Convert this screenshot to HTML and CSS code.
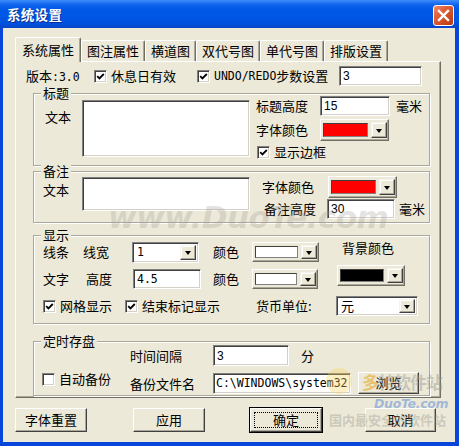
FILE: index.html
```html
<!DOCTYPE html>
<html lang="zh-CN">
<head>
<meta charset="utf-8">
<title>系统设置</title>
<link rel="stylesheet" href="styles.css">
</head>
<body>
<div class="window">
  <div class="titlebar">
    <span class="title">系统设置</span>
    <span class="close"><svg width="13" height="13" viewBox="0 0 13 13"><path d="M2 2 L11 11 M11 2 L2 11" stroke="#fff" stroke-width="2.4" stroke-linecap="square"/></svg></span>
  </div>
  <div class="frame">
    <div class="tabs">
      <div class="tab sel">系统属性</div>
      <div class="tab">图注属性</div>
      <div class="tab">横道图</div>
      <div class="tab">双代号图</div>
      <div class="tab">单代号图</div>
      <div class="tab">排版设置</div>
    </div>
    <div class="panel">
      <div class="row1">
        <div class="c-ver">版本<span class="mono">:3.0</span></div>
        <label class="c-rest chkl"><span class="chk"><svg width="9" height="9" viewBox="0 0 9 9"><path d="M1.2 4.2 L3.4 6.4 L7.8 2" stroke="#000" stroke-width="1.8" fill="none"/></svg></span>休息日有效</label>
        <label class="c-undo chkl"><span class="chk"><svg width="9" height="9" viewBox="0 0 9 9"><path d="M1.2 4.2 L3.4 6.4 L7.8 2" stroke="#000" stroke-width="1.8" fill="none"/></svg></span><span class="mono">UNDO/REDO</span>步数设置</label>
        <div class="inp w83 sans">3</div>
      </div>

      <div class="group g1">
        <span class="legend">标题</span>
        <div class="g1-body">
          <div class="g1-lbl">文本</div>
          <div class="ta g1-ta"></div>
          <div class="rcol g1-r">
            <div class="rrow h20"><span class="lw64">标题高度</span><div class="inp w70 sans">15</div><span class="unit6">毫米</span></div>
            <div class="rrow h22 mt3"><span class="lw64">字体颜色</span><div class="cbox w69 h22"><span class="sw red"></span><span class="ddbtn"></span></div></div>
            <label class="rrow h16 mt3 chkl ml1"><span class="chk"><svg width="9" height="9" viewBox="0 0 9 9"><path d="M1.2 4.2 L3.4 6.4 L7.8 2" stroke="#000" stroke-width="1.8" fill="none"/></svg></span>显示边框</label>
          </div>
        </div>
      </div>

      <div class="group g2">
        <span class="legend">备注</span>
        <div class="g2-body">
          <div class="g2-lbl">文本</div>
          <div class="ta g2-ta"></div>
          <div class="rcol g2-r">
            <div class="rrow h22 mt4"><span class="lw66">字体颜色</span><div class="cbox w69 h22"><span class="sw red"></span><span class="ddbtn"></span></div></div>
            <div class="rrow h20 mt1"><span class="lw65 pl2">备注高度</span><div class="inp w68 sans">30</div><span class="unit4">毫米</span></div>
          </div>
        </div>
      </div>

      <div class="group g3">
        <span class="legend">显示</span>
        <div class="grow r1">
          <span class="w40">线条</span>
          <span class="w49">线宽</span>
          <div class="combo w67 h21 mr14"><span class="val mono">1</span><span class="ddbtn"></span></div>
          <span class="w39">颜色</span>
          <div class="cbox w67 h20 mr23"><span class="sw white"></span><span class="ddbtn"></span></div>
          <span class="bgl">背景颜色</span>
        </div>
        <div class="grow r2">
          <span class="w43">文字</span>
          <span class="w47">高度</span>
          <div class="inp w68 mr12 mono">4.5</div>
          <span class="w39">颜色</span>
          <div class="cbox w66 h20 mr19"><span class="sw white"></span><span class="ddbtn"></span></div>
          <div class="cbox w68 h21 up3"><span class="sw black"></span><span class="ddbtn"></span></div>
        </div>
        <div class="grow r3">
          <label class="chkl w82"><span class="chk"><svg width="9" height="9" viewBox="0 0 9 9"><path d="M1.2 4.2 L3.4 6.4 L7.8 2" stroke="#000" stroke-width="1.8" fill="none"/></svg></span>网格显示</label>
          <label class="chkl w131"><span class="chk"><svg width="9" height="9" viewBox="0 0 9 9"><path d="M1.2 4.2 L3.4 6.4 L7.8 2" stroke="#000" stroke-width="1.8" fill="none"/></svg></span>结束标记显示</label>
          <span class="w80">货币单位:</span>
          <div class="combo w82 h20"><span class="val">元</span><span class="ddbtn"></span></div>
        </div>
      </div>

      <div class="group g4">
        <span class="legend">定时存盘</span>
        <div class="grow t1">
          <span class="w83">时间间隔</span>
          <div class="inp w76 h21 sans">3</div>
          <span class="unit12">分</span>
        </div>
        <div class="grow t2">
          <label class="chkl w88 up2"><span class="chk"></span>自动备份</label>
          <span class="w83 dn1">备份文件名</span>
          <div class="inp w138 h21 mono path">C:\WINDOWS\system32</div>
          <button class="btn browse">浏览</button>
        </div>
      </div>
    </div>

    <div class="buttons">
      <button class="btn bb">字体重置</button>
      <button class="btn bb b2">应用</button>
      <button class="btn bb b3 def"><span class="focus">确定</span></button>
      <button class="btn bb b4">取消</button>
    </div>
  </div>

  <div class="wm wm-url">www.DuoTe.com</div>
  <div class="wm wm-logo">
    <span class="wm-circle"></span>
    <span class="wm-name"><span class="wm-duo">多</span>特软件站</span>
    <span class="wm-dom">DuoTe.com</span>
    <span class="wm-slogan">国内最安全的软件站</span>
  </div>
</div>
</body>
</html>
```

FILE: styles.css
```css
* { box-sizing: border-box; }
html, body { margin: 0; padding: 0; }
body {
  width: 459px;
  height: 446px;
  overflow: hidden;
  background: #0746D8;
  font: 13px/18px "Noto Sans CJK SC", "Liberation Sans", sans-serif;
  color: #000;
}
.mono { font-family: "DejaVu Sans Mono", "Noto Sans CJK SC", monospace; font-size: 11.5px; }
.sans { font-family: "Liberation Sans", sans-serif; font-size: 12px; }

.window {
  position: relative;
  width: 459px;
  height: 446px;
  display: flex;
  flex-direction: column;
}

/* title bar */
.titlebar {
  flex: none;
  height: 28px;
  display: flex;
  align-items: flex-start;
  justify-content: space-between;
  padding: 0 5px 0 7px;
  background: linear-gradient(to bottom, #3C8EFB 0px, #2A7BF6 2px, #0D61EC 5px, #0058E7 10px, #0055E4 18px, #0050DC 24px, #0A44C4 28px);
}
.title {
  margin-top: 5px;
  color: #fff;
  font-weight: bold;
  font-size: 13.5px;
  line-height: 18px;
  letter-spacing: 0.3px;
  text-shadow: 1px 1px 0 #0A2C8C;
}
.close {
  margin-top: 5px;
  width: 21px;
  height: 21px;
  border: 1px solid #fff;
  border-radius: 3px;
  background: linear-gradient(135deg, #F08A6A 0%, #E0603A 35%, #C8461E 75%, #B03A16 100%);
  display: flex;
  align-items: center;
  justify-content: center;
}

/* client frame */
.frame {
  flex: 1;
  background: #ECE9D8;
  border-style: solid;
  border-color: #0746D8;
  border-width: 0 4px 4px 3px;
  padding: 9px 0 0 12px;
}

/* tabs */
.tabs {
  height: 24px;
  display: flex;
  align-items: flex-end;
  position: relative;
  z-index: 1;
}
.tab {
  height: 21px;
  padding: 0 5px;
  line-height: 19px;
  border: 1px solid;
  border-color: #fff #716F64 transparent #fff;
  border-bottom: none;
  border-radius: 2px 2px 0 0;
  box-shadow: inset -1px 0 0 #ACA899;
  background: #ECE9D8;
  white-space: nowrap;
}
.tab.sel {
  height: 25px;
  margin-bottom: -1px;
  padding: 3px 6px 0;
  line-height: 18px;
}

/* panel */
.panel {
  width: 426px;
  height: 337px;
  border: 1px solid;
  border-color: #fff #716F64 #716F64 #fff;
  box-shadow: inset -1px -1px 0 #ACA899;
  padding-top: 4px;
}
.row1 {
  height: 20px;
  display: flex;
  align-items: center;
  padding-left: 10px;
  white-space: nowrap;
}
.c-ver { width: 68px; }
.c-rest { width: 103px; }
.c-undo { width: 142px; }

/* check boxes */
.chkl { display: flex; align-items: center; white-space: nowrap; }
.chk {
  flex: none;
  width: 13px;
  height: 13px;
  margin-right: 4px;
  background: #fff;
  border: 1px solid;
  border-color: #808080 #fff #fff #808080;
  box-shadow: inset 1px 1px 0 #404040, inset -1px -1px 0 #D4D0C8;
  display: flex;
  align-items: center;
  justify-content: center;
}

/* inputs */
.inp {
  flex: none;
  height: 20px;
  background: #fff;
  border: 1px solid;
  border-color: #808080 #fff #fff #808080;
  box-shadow: inset 1px 1px 0 #404040, inset -1px -1px 0 #D4D0C8;
  padding: 0 3px;
  display: flex;
  align-items: center;
  white-space: nowrap;
  overflow: hidden;
}
.ta {
  flex: none;
  background: #fff;
  border: 1px solid;
  border-color: #808080 #fff #fff #808080;
  box-shadow: inset 1px 1px 0 #404040, inset -1px -1px 0 #D4D0C8;
}
.combo {
  flex: none;
  display: flex;
  align-items: stretch;
  background: #fff;
  border: 1px solid;
  border-color: #808080 #fff #fff #808080;
  box-shadow: inset 1px 1px 0 #404040, inset -1px -1px 0 #D4D0C8;
  padding: 2px;
}
.combo .val { flex: 1; padding-left: 2px; display: flex; align-items: center; line-height: 14px; }
.ddbtn {
  flex: none;
  width: 16px;
  background: #ECE9D8;
  border: 1px solid;
  border-color: #F4F3EE #404040 #404040 #F4F3EE;
  box-shadow: inset -1px -1px 0 #ACA899, inset 1px 1px 0 #fff;
  display: flex;
  align-items: center;
  justify-content: center;
}
.ddbtn::after {
  content: "";
  width: 0;
  height: 0;
  border-left: 3.5px solid transparent;
  border-right: 3.5px solid transparent;
  border-top: 4px solid #000;
  margin-top: 1px;
}
.cbox {
  flex: none;
  display: flex;
  align-items: stretch;
  gap: 3px;
  padding: 2px 1px 2px 2px;
  background: #ECE9D8;
  border: 1px solid;
  border-color: #fff #716F64 #716F64 #fff;
  box-shadow: inset -1px -1px 0 #ACA899;
}
.cbox .sw {
  flex: 1;
  border: 1px solid;
  border-color: #404040 #808080 #808080 #404040;
  margin: 1px 0;
}
.sw.red { background: #FF0000; }
.sw.white { background: #fff; }
.sw.black { background: #000; }

/* groups */
.group {
  position: relative;
  margin-left: 17px;
  width: 397px;
  border: 1px solid #ACA899;
  box-shadow: inset 1px 1px 0 #fff, 1px 1px 0 #fff;
}
.legend {
  position: absolute;
  top: -10px;
  left: 7px;
  padding: 0 2px;
  background: #ECE9D8;
  line-height: 18px;
  white-space: nowrap;
}
.g1 { margin-top: 7px; height: 73px; padding: 2px 0 0 11px; }
.g2 { margin-top: 5px; height: 52px; padding: 0 0 0 9px; }
.g3 { margin-top: 12px; height: 89px; padding: 0 0 0 9px; }
.g4 { margin-top: 17px; height: 55px; padding: 0 0 0 8px; }

.g1-body, .g2-body { display: flex; align-items: flex-start; }
.g1-lbl { width: 37px; margin-top: 12px; }
.g1-ta { width: 168px; height: 57px; margin-top: 4px; }
.g1-r { margin-left: 6px; }
.g2-lbl { width: 39px; margin-top: 9px; }
.g2-ta { width: 168px; height: 34px; margin-top: 5px; }
.g2-r { margin-left: 12px; }

.rcol { display: flex; flex-direction: column; }
.rrow { display: flex; align-items: center; white-space: nowrap; }
.h16 { height: 16px; }
.h20 { height: 20px; }
.h21 { height: 21px; }
.h22 { height: 22px; }
.mt1 { margin-top: 1px; }
.mt3 { margin-top: 3px; }
.mt4 { margin-top: 4px; }
.ml1 { margin-left: 1px; }
.pl2 { padding-left: 2px; }
.lw64 { width: 64px; flex: none; }
.lw65 { width: 65px; flex: none; }
.lw66 { width: 66px; flex: none; }
.unit6 { margin-left: 6px; }
.unit4 { margin-left: 4px; }
.unit12 { margin-left: 12px; }

.w39 { width: 39px; flex: none; }
.w40 { width: 40px; flex: none; }
.w43 { width: 43px; flex: none; }
.w47 { width: 47px; flex: none; }
.w49 { width: 49px; flex: none; }
.w66 { width: 66px; }
.w67 { width: 67px; }
.w68 { width: 68px; }
.w69 { width: 69px; }
.w70 { width: 70px; }
.w76 { width: 76px; }
.w80 { width: 80px; flex: none; }
.w82 { width: 82px; flex: none; }
.w83 { width: 83px; flex: none; }
.w88 { width: 88px; flex: none; }
.w131 { width: 131px; flex: none; }
.w138 { width: 138px; }
.mr12 { margin-right: 12px; }
.mr14 { margin-right: 14px; }
.mr19 { margin-right: 19px; }
.mr23 { margin-right: 23px; }

.grow { display: flex; align-items: center; height: 22px; white-space: nowrap; }
.g3 .r1 { margin-top: 5px; }
.g3 .r2 { margin-top: 5px; }
.g3 .r3 { margin-top: 5px; }
.bgl { align-self: flex-start; margin-top: -2px; }
.up3 { align-self: flex-start; margin-top: -3px; }
.g4 .t1 { margin-top: 3px; height: 21px; padding-left: 88px; }
.g4 .t2 { margin-top: 6px; }
.up2 { align-self: flex-start; margin-top: -2px; }
.dn1 { position: relative; top: 1px; }
.path { padding-left: 2px; }

/* buttons */
.btn {
  font: inherit;
  color: #000;
  background: #ECE9D8;
  border: 1px solid;
  border-color: #fff #404040 #404040 #fff;
  box-shadow: inset -1px -1px 0 #ACA899;
  padding: 0;
  margin: 0;
  display: flex;
  align-items: center;
  justify-content: center;
}
.browse { width: 61px; height: 22px; margin-left: 7px; }
.buttons { display: flex; margin-top: 10px; }
.bb { width: 72px; height: 24px; }
.b2 { margin-left: 46px; }
.b3 { margin-left: 45px; }
.b4 { margin-left: 43px; width: 71px; }
.def {
  outline: 1px solid #000;
  outline-offset: 0;
  border-color: #fff #404040 #404040 #fff;
  padding: 3px;
}
.focus {
  width: 100%;
  height: 100%;
  border: 1px dotted #000;
  display: flex;
  align-items: center;
  justify-content: center;
}

/* watermarks */
.wm { position: absolute; pointer-events: none; }
.wm-url {
  left: 108px;
  top: 200px;
  font: italic bold 31px/34px "DejaVu Sans", sans-serif;
  color: rgba(160, 158, 150, 0.28);
  letter-spacing: -0.5px;
}
.wm-logo {
  left: 326px;
  top: 366px;
  width: 133px;
  height: 66px;
}
.wm-circle {
  position: absolute;
  left: 0;
  top: 2px;
  width: 26px;
  height: 26px;
  border-radius: 50%;
  background: rgba(250, 210, 90, 0.35);
}
.wm-name {
  position: absolute;
  left: 36px;
  top: 6px;
  font: bold 17px/20px "Noto Sans CJK SC", sans-serif;
  color: rgba(150, 150, 140, 0.45);
  letter-spacing: -1px;
  white-space: nowrap;
}
.wm-duo { color: rgba(230, 170, 40, 0.6); }
.wm-dom {
  position: absolute;
  left: 48px;
  top: 30px;
  font: italic bold 12.5px/16px "DejaVu Sans", sans-serif;
  color: rgba(60, 120, 220, 0.45);
  letter-spacing: -0.3px;
  white-space: nowrap;
}
.wm-slogan {
  position: absolute;
  left: 3px;
  top: 46px;
  font: bold 13px/16px "Noto Sans CJK SC", sans-serif;
  color: rgba(150, 150, 140, 0.4);
  letter-spacing: 0;
  white-space: nowrap;
}
```
